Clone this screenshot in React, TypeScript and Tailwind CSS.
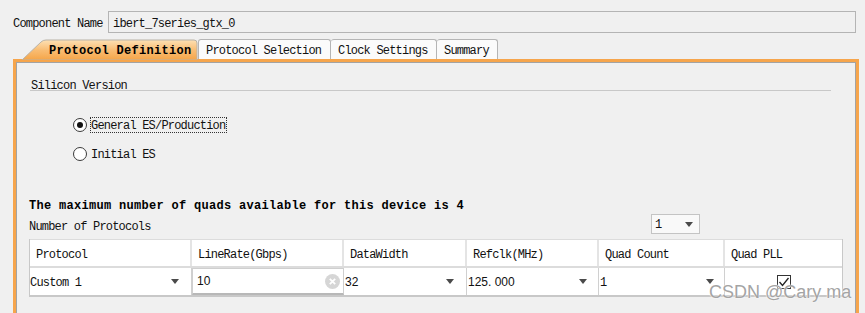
import React from "react";

const Arrow = () => (
  <svg width="8" height="5" viewBox="0 0 8 5" className="shrink-0">
    <path d="M0 0 L8 0 L4 5 Z" fill="#4a4a4a" />
  </svg>
);

const Radio = ({ checked }: { checked?: boolean }) => (
  <div className="w-[14px] h-[14px] rounded-full border border-[#3a3a3a] bg-white flex items-center justify-center shrink-0">
    {checked && <div className="w-[6px] h-[6px] rounded-full bg-[#111]" />}
  </div>
);

export default function App() {
  return (
    <div className="w-[865px] h-[313px] bg-[#f0f0f0] overflow-hidden relative font-['Liberation_Mono',monospace] text-[12px] tracking-[-0.8px] text-[#111]">
      {/* Component name row */}
      <div className="flex items-stretch mt-[11px] pl-[13px] h-[22px]">
        <div className="w-[95px] leading-[14px] flex items-center pt-[3px]">Component Name</div>
        <div className="w-[748px] border border-[#b4b4b4] flex items-center pl-[4px] pt-[3px] leading-[14px]">
          ibert_7series_gtx_0
        </div>
      </div>

      {/* Tabs */}
      <div className="flex items-end mt-[6px] h-[20px] pl-[21px]">
        <div className="relative w-[177px] h-[21px] -mb-px">
          <svg className="absolute inset-0" width="177" height="21" viewBox="0 0 177 21">
            <defs>
              <linearGradient id="tg" x1="0" y1="0" x2="0" y2="1">
                <stop offset="0" stopColor="#fde0b4" />
                <stop offset="0.5" stopColor="#f9bd74" />
                <stop offset="1" stopColor="#f5a548" />
              </linearGradient>
            </defs>
            <path d="M1 21 L20 3 Q22 1 25 1 L173 1 Q176 1 176 4 L176 21 Z" fill="url(#tg)" stroke="#b9b2a6" strokeWidth="1" />
          </svg>
          <div className="relative pl-[28px] pt-[5px] font-bold text-[12px] tracking-[0.3px] leading-[14px] text-black">
            Protocol Definition
          </div>
        </div>
        <div className="h-[20px] w-[133px] border border-b-0 border-[#b5b5b5] rounded-t-[3px] bg-[#fbfbfb] pl-[7px] pt-[4px] leading-[14px]">
          Protocol Selection
        </div>
        <div className="h-[20px] w-[106px] border border-b-0 border-l-0 border-[#b5b5b5] rounded-t-[3px] bg-[#fbfbfb] pl-[7px] pt-[4px] leading-[14px]">
          Clock Settings
        </div>
        <div className="h-[20px] w-[61px] border border-b-0 border-l-0 border-[#b5b5b5] rounded-t-[3px] bg-[#fbfbfb] pl-[7px] pt-[4px] leading-[14px]">
          Summary
        </div>
      </div>

      {/* Panel */}
      <div className="ml-[13px] w-[846px] h-[260px] border-[3px] border-[#f6a54c]">
        <div className="h-full border border-[#a3a3a3] border-b-0">
          {/* Silicon Version */}
          <div className="ml-[13px] mt-[15px] w-[801px] border-b border-[#c8c8c8] h-[13px] leading-[16px] pl-[1px]">
            Silicon Version
          </div>

          {/* Radios */}
          <div className="flex items-center h-[16px] mt-[26px] ml-[56px] gap-[3px]">
            <Radio checked />
            <div className="border border-dotted border-[#333] h-[16px] flex items-center pt-[2px] pr-[1px] leading-[14px]">
              General ES/Production
            </div>
          </div>
          <div className="flex items-center h-[16px] mt-[13px] ml-[56px] gap-[4px]">
            <Radio />
            <div className="leading-[14px] pt-[2px]">Initial ES</div>
          </div>

          {/* Max quads */}
          <div className="ml-[12px] mt-[37px] h-[14px] leading-[14px] font-bold tracking-[0.3px] text-black">
            The maximum number of quads available for this device is 4
          </div>

          {/* Number of protocols */}
          <div className="ml-[12px] mt-[1px] flex items-stretch h-[20px]">
            <div className="w-[622px] leading-[14px] flex items-center pt-[5px]">Number of Protocols</div>
            <div className="w-[49px] border border-[#c4c4c4] bg-[#f9f9f9] flex items-center justify-between pl-[3px] pr-[6px]">
              <span className="leading-[14px] pt-[2px]">1</span>
              <Arrow />
            </div>
          </div>

          {/* Table */}
          <div className="ml-[12px] mt-[5px] w-[814px] border-l border-r border-[#c8c8c8]">
            <div className="grid grid-cols-[162px_152px_123px_132px_126px_117px] h-[29px] bg-white border-t border-b-2 border-[#dcdcdc]">
              {["Protocol", "LineRate(Gbps)", "DataWidth", "Refclk(MHz)", "Quad Count", "Quad PLL"].map((h) => (
                <div key={h} className="border-r-2 border-[#e4e4e4] last:border-r-0 flex items-center pl-[6px] pt-[3px] leading-[14px]">
                  {h}
                </div>
              ))}
            </div>
            <div className="grid grid-cols-[162px_152px_123px_132px_126px_117px] h-[29px] bg-white border-b-2 border-[#c8c8c8]">
              <div className="border-r border-[#d0d0d0] flex items-center justify-between pr-[12px]">
                <span className="leading-[14px] pt-[2px]">Custom 1</span>
                <Arrow />
              </div>
              <div className="border border-[#cfcfcf] border-b-2 border-b-[#b8b8b8] flex items-center justify-between pl-[4px] pr-[3px] font-['Liberation_Sans',sans-serif] tracking-normal text-[12px]">
                <span>10</span>
                <svg width="15" height="15" viewBox="0 0 15 15">
                  <circle cx="7.5" cy="7.5" r="7.5" fill="#d6d6d6" />
                  <path d="M4.8 4.8 L10.2 10.2 M10.2 4.8 L4.8 10.2" stroke="#fff" strokeWidth="1.8" />
                </svg>
              </div>
              <div className="border-r border-[#d0d0d0] flex items-center justify-between pl-[1px] pr-[12px]">
                <span className="font-['Liberation_Sans',sans-serif] tracking-normal">32</span>
                <Arrow />
              </div>
              <div className="border-r border-[#d0d0d0] flex items-center justify-between pl-[1px] pr-[11px]">
                <span className="leading-[14px] font-['Liberation_Sans',sans-serif] tracking-normal">125. 000</span>
                <Arrow />
              </div>
              <div className="border-r border-[#d0d0d0] flex items-center justify-between pl-[1px] pr-[10px]">
                <span className="leading-[14px] pt-[2px]">1</span>
                <Arrow />
              </div>
              <div className="flex items-center justify-center">
                <svg width="14" height="14" viewBox="0 0 14 14">
                  <rect x="0.5" y="0.5" width="13" height="13" fill="#fff" stroke="#333" />
                  <path d="M2.5 7 L5.5 10.5 L11.5 3" fill="none" stroke="#222" strokeWidth="1.3" />
                </svg>
              </div>
            </div>
          </div>
        </div>
      </div>

      {/* Watermark */}
      <div className="absolute left-[709px] top-[281px] font-['Liberation_Sans',sans-serif] text-[18px] tracking-normal text-[#a4a4a4] leading-[22px] [text-shadow:0_0_2px_#fff,0_0_1px_#fff]">
        CSDN @Cary ma
      </div>
    </div>
  );
}
